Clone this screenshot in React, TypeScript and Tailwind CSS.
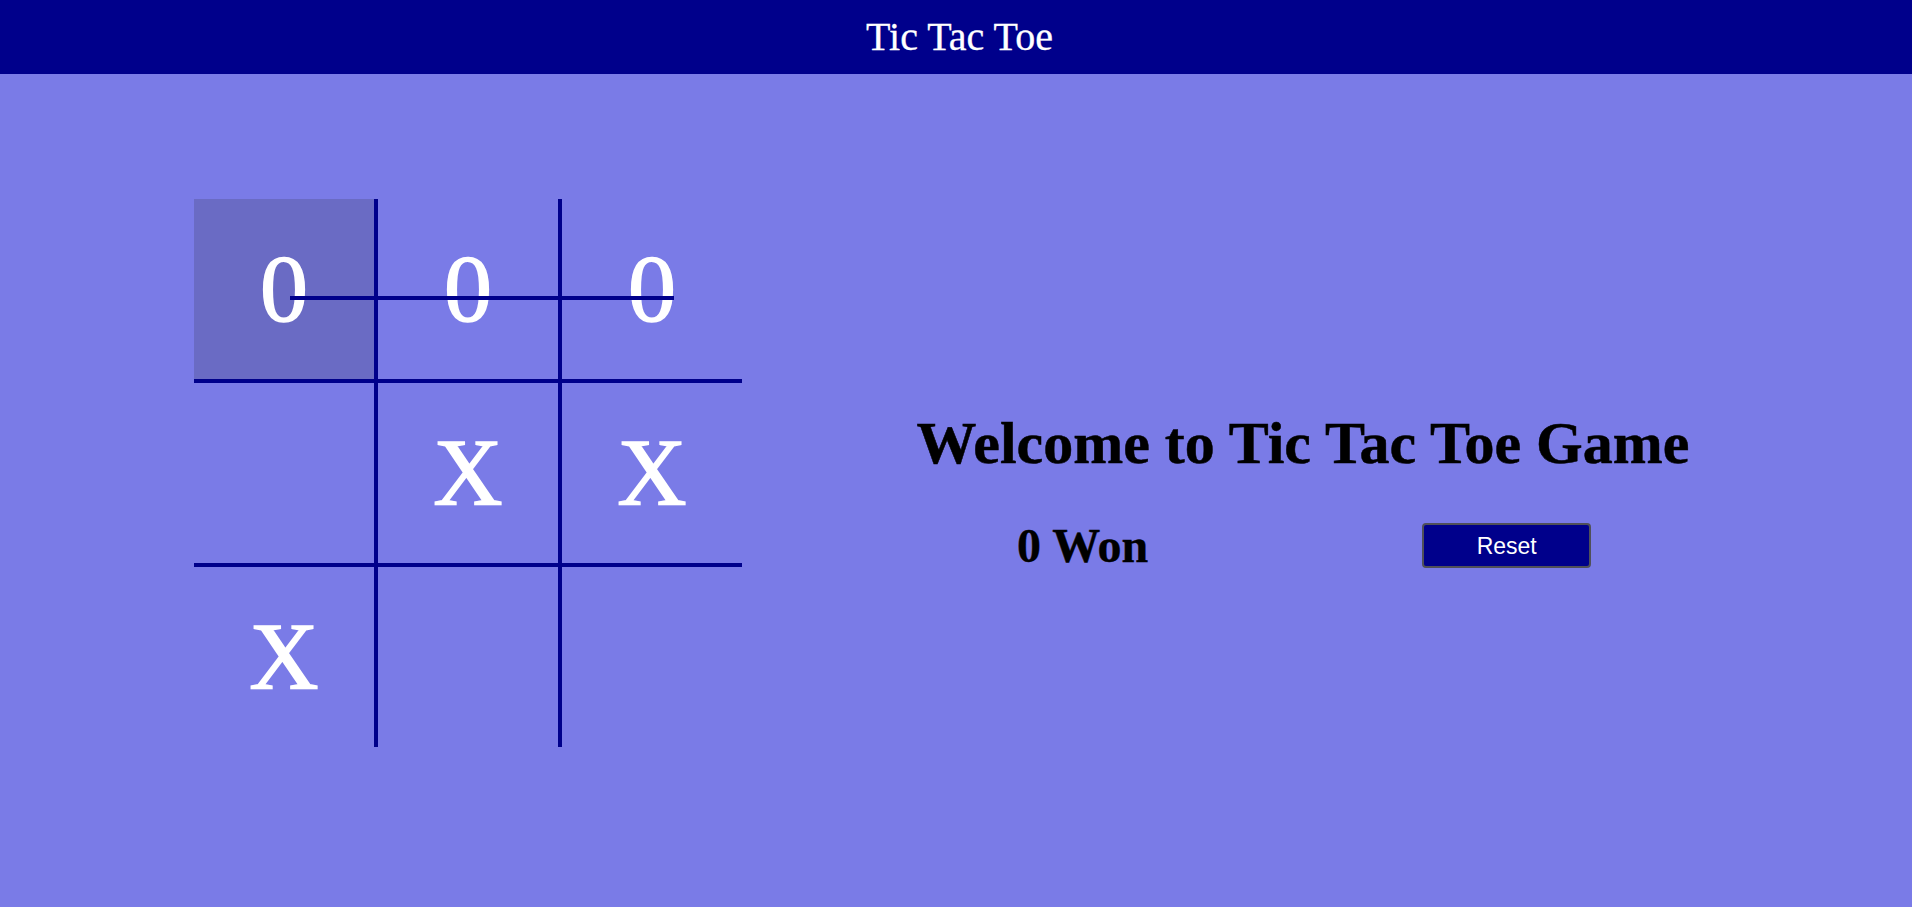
import React from "react";

const cells: { v: string; cls: string }[] = [
  { v: "0", cls: "w-[184px] h-[184px] border-r-4 border-b-4 bg-[#6a6bc4]" },
  { v: "0", cls: "w-[184px] h-[184px] border-r-4 border-b-4" },
  { v: "0", cls: "w-[180px] h-[184px] border-b-4" },
  { v: "", cls: "w-[184px] h-[184px] border-r-4 border-b-4" },
  { v: "X", cls: "w-[184px] h-[184px] border-r-4 border-b-4" },
  { v: "X", cls: "w-[180px] h-[184px] border-b-4" },
  { v: "X", cls: "w-[184px] h-[180px] border-r-4" },
  { v: "", cls: "w-[184px] h-[180px] border-r-4" },
  { v: "", cls: "w-[180px] h-[180px]" },
];

export default function App() {
  return (
    <div className="min-h-[907px] w-full bg-[#7a7be7]" style={{ fontFamily: '"Liberation Serif", "Times New Roman", serif' }}>
      <header className="h-[74px] bg-[#00008b] flex items-center justify-center pl-[7px]">
        <span className="text-white text-[40px] leading-[46px] [-webkit-text-stroke:0.3px_white]">Tic Tac Toe</span>
      </header>
      <main className="flex items-start pl-[194px] pt-[125px]">
        <div className="relative grid grid-cols-[184px_184px_180px] w-[548px]">
          {cells.map((c, i) => (
            <div
              key={i}
              className={`flex items-center justify-center border-[#00008b] text-white text-[96px] leading-[110px] [-webkit-text-stroke:1.5px_white] ${c.cls}`}
            >
              {c.v}
            </div>
          ))}
          <div className="absolute left-[96px] top-[97px] w-[384px] h-[4px] bg-[#00008b]" />
        </div>
        <div className="ml-[171px] mt-[210px] w-[780px] flex flex-col">
          <h1 className="text-[60px] leading-[68px] font-bold text-black text-center whitespace-nowrap [-webkit-text-stroke:0.5px_black]">
            Welcome to Tic Tac Toe Game
          </h1>
          <div className="mt-[41px] flex items-center pl-[104px]">
            <span className="text-[48px] leading-[55px] font-bold text-black whitespace-nowrap [-webkit-text-stroke:0.4px_black]">0 Won</span>
            <button
              className="ml-[274px] w-[169px] h-[45px] bg-[#00008b] text-white border-2 border-[#505058] rounded-[4px] text-[23px] leading-[26px] flex items-center justify-center"
              style={{ fontFamily: '"Liberation Sans", Arial, sans-serif' }}
            >
              Reset
            </button>
          </div>
        </div>
      </main>
    </div>
  );
}
